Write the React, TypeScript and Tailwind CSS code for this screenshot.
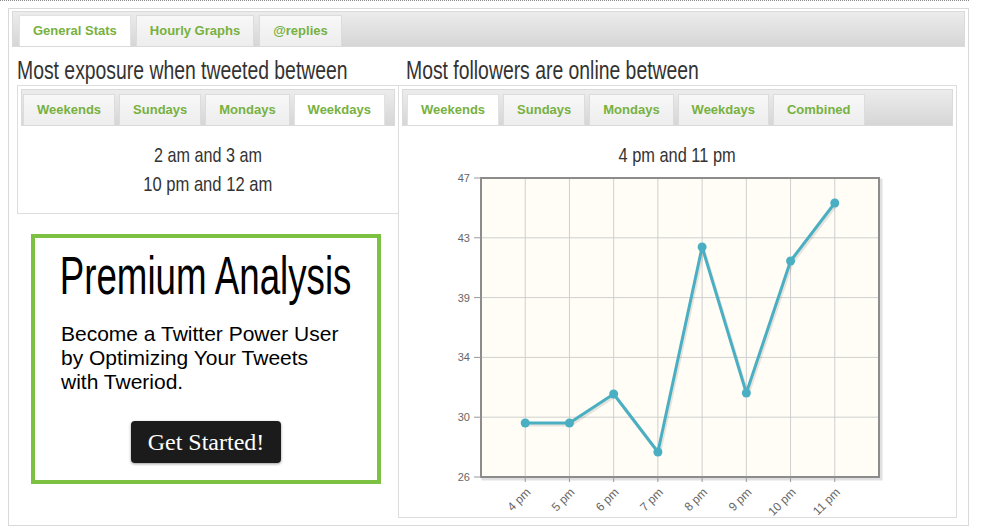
import React from 'react';

const Tab = ({ label, active, px }: { label: string; active?: boolean; px: string }) => (
  <div
    className={`h-[31px] ${px} flex items-center text-[13px] font-bold text-[#77b13f] border border-b-0 ${
      active ? 'bg-white border-[#e2e2e2]' : 'bg-gradient-to-b from-[#f8f8f8] to-[#ededed] border-[#dcdcdc]'
    }`}
  >
    {label}
  </div>
);

const TabBar = ({ tabs, active, className, px }: { tabs: string[]; active: number; className: string; px: string }) => (
  <div className={`h-[37px] flex items-end bg-gradient-to-b from-[#ececec] to-[#d6d6d6] border border-[#dadada] ${className}`}>
    {tabs.map((t, i) => (
      <Tab key={t} label={t} active={i === active} px={px} />
    ))}
  </div>
);

// condensed display text (narrow headline face)
const Narrow = ({ children, className }: { children: React.ReactNode; className: string }) => (
  <span className={`inline-block whitespace-nowrap ${className}`}>{children}</span>
);

// hourly chart, coordinates relative to the right box content
const hours = ['4 pm', '5 pm', '6 pm', '7 pm', '8 pm', '9 pm', '10 pm', '11 pm'];
const pointsY = [254, 254, 225, 283, 78, 224, 92, 34];
const yLabels = ['47', '43', '39', '34', '30', '26'];

const Chart = () => {
  const left = 79;
  const top = 9;
  const w = 398;
  const h = 299;
  const xs = hours.map((_, i) => left + (w / 9) * (i + 1));
  const ys = yLabels.map((_, i) => top + (h / 5) * i);
  const line = xs.map((x, i) => `${x},${pointsY[i]}`).join(' ');
  const shadow = xs.map((x, i) => `${x + 1.5},${pointsY[i] + 2}`).join(' ');

  return (
    <svg width="550" height="346" className="block overflow-visible">
      <rect x={left + 2} y={top + 2} width={w} height={h} fill="none" stroke="rgba(0,0,0,0.12)" strokeWidth="3" />
      <rect x={left} y={top} width={w} height={h} fill="#fffdf5" />
      {xs.map((x) => (
        <line key={x} x1={x} y1={top} x2={x} y2={top + h} stroke="#cfcfcf" strokeWidth="1" />
      ))}
      {ys.slice(1, 5).map((y) => (
        <line key={y} x1={left} y1={y} x2={left + w} y2={y} stroke="#cfcfcf" strokeWidth="1" />
      ))}
      <rect x={left} y={top} width={w} height={h} fill="none" stroke="#8c8c8c" strokeWidth="2" />
      {ys.map((y, i) => (
        <g key={`y${i}`}>
          <line x1={left - 7} y1={y} x2={left} y2={y} stroke="#999" strokeWidth="1" />
          <text x={left - 11} y={y + 4} textAnchor="end" fontSize="11" fill="#666" fontFamily="Liberation Sans, Arial, sans-serif">
            {yLabels[i]}
          </text>
        </g>
      ))}
      {xs.map((x, i) => (
        <g key={`x${i}`}>
          <line x1={x} y1={top + h} x2={x} y2={top + h + 5} stroke="#999" strokeWidth="1" />
          <text
            x={x + 6}
            y={top + h + 16}
            textAnchor="end"
            fontSize="12"
            fill="#666"
            fontFamily="Liberation Sans, Arial, sans-serif"
            transform={`rotate(-45 ${x + 6} ${top + h + 16})`}
          >
            {hours[i]}
          </text>
        </g>
      ))}
      <polyline points={shadow} fill="none" stroke="rgba(0,0,0,0.1)" strokeWidth="3" strokeLinejoin="round" />
      <polyline points={line} fill="none" stroke="#4aafc2" strokeWidth="3" strokeLinejoin="round" />
      {xs.map((x, i) => (
        <circle key={`p${i}`} cx={x} cy={pointsY[i]} r="4.5" fill="#4aafc2" />
      ))}
    </svg>
  );
};

const App = () => {
  return (
    <div className="w-[992px] h-[531px] bg-white overflow-hidden font-['Liberation_Sans',Arial,sans-serif]">
      <div className="w-[969px] border-t border-dotted border-[#8a8a8a]" />
      <div className="ml-[8px] mt-[7px] w-[961px] h-[518px] border border-[#d9d9d9] pt-[2px] px-[3px]">
        {/* main tabs */}
        <div className="h-[36px] flex items-end gap-[5px] pl-[6px] bg-gradient-to-b from-[#ececec] to-[#d6d6d6] border border-[#dadada]">
          <Tab label="General Stats" active px="px-[13px]" />
          <Tab label="Hourly Graphs" px="px-[13px]" />
          <Tab label="@replies" px="px-[13px]" />
        </div>

        <div className="flex pl-[5px] mt-[8px]">
          {/* left column */}
          <div className="w-[382px]">
            <h2 className="h-[30px] text-[26px] leading-[30px] text-[#333]">
              <Narrow className="origin-left scale-x-[0.745]">Most exposure when tweeted between</Narrow>
            </h2>
            <div className="h-[129px] border border-[#dddddd] pt-[3px] px-[3px]">
              <TabBar tabs={['Weekends', 'Sundays', 'Mondays', 'Weekdays']} active={3} className="pl-[1px] gap-[4px]" px="px-[13px]" />
              <div className="pt-[14px] text-center text-[21px] leading-[29px] text-[#333]">
                <div>
                  <Narrow className="scale-x-[0.77]">2 am and 3 am</Narrow>
                </div>
                <div>
                  <Narrow className="scale-x-[0.79]">10 pm and 12 am</Narrow>
                </div>
              </div>
            </div>

            {/* premium box */}
            <div className="ml-[14px] mt-[20px] w-[350px] h-[250px] border-4 border-[#7dc142] flex flex-col items-center">
              <div className="mt-[12px] h-[50px] text-[54px] leading-[50px] text-black">
                <Narrow className="scale-x-[0.68]">Premium Analysis</Narrow>
              </div>
              <p className="self-start ml-[26px] mt-[22px] text-[21px] leading-[24px] text-black">
                Become a Twitter Power User
                <br />
                by Optimizing Your Tweets
                <br />
                with Tweriod.
              </p>
              <button className="mt-[27px] w-[150px] h-[42px] rounded-[4px] bg-[#1b1b1b] text-white text-[24px] font-['Liberation_Serif','Times_New_Roman',serif] shadow-[0_1px_3px_rgba(0,0,0,0.4)]">
                Get Started!
              </button>
            </div>
          </div>

          {/* right column */}
          <div className="-ml-[1px]">
            <h2 className="h-[30px] text-[26px] leading-[30px] text-[#333] pl-[8px]">
              <Narrow className="origin-left scale-x-[0.745]">Most followers are online between</Narrow>
            </h2>
            <div className="w-[559px] h-[433px] border border-[#dddddd] pt-[3px] px-[3px]">
              <TabBar tabs={['Weekends', 'Sundays', 'Mondays', 'Weekdays', 'Combined']} active={0} className="pl-[4px] gap-[4px]" px="px-[13px]" />
              <div className="pt-[14px] text-center text-[21px] leading-[29px] text-[#333]">
                <Narrow className="scale-x-[0.78]">4 pm and 11 pm</Narrow>
              </div>
              <Chart />
            </div>
          </div>
        </div>
      </div>
    </div>
  );
};

export default App;
